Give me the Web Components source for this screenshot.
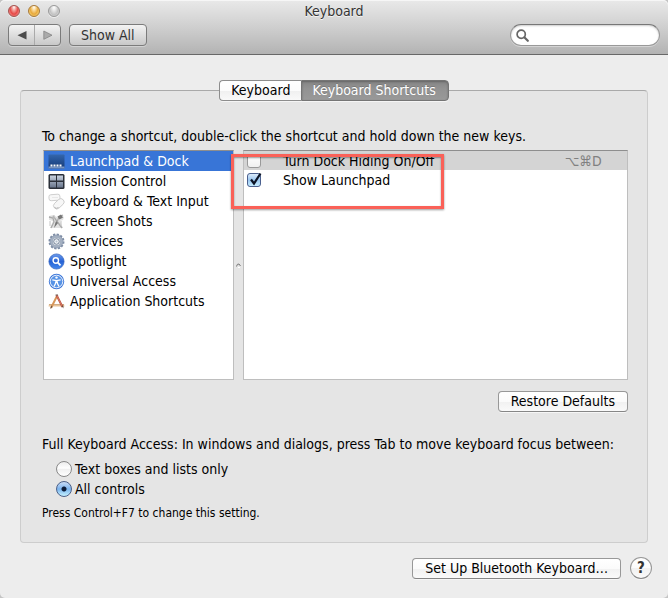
<!DOCTYPE html>
<html lang="en">
<head>
<meta charset="utf-8">
<title>Keyboard</title>
<style>
html { background: #c4c4c4; }
body { margin: 0; font: 14px/20px "DejaVu Sans Condensed", "DejaVu Sans", sans-serif; color: #000; }
</style>
</head>
<body>
<pref-window></pref-window>
<script>
function define(name, html) {
  const t = document.createElement('template');
  t.innerHTML = '<style>*{box-sizing:border-box}button,input{font:inherit;color:inherit;margin:0}</style>' + html;
  customElements.define(name, class extends HTMLElement {
    constructor() {
      super();
      this.attachShadow({ mode: 'open' }).append(t.content.cloneNode(true));
    }
  });
}

define('mac-button', `
<style>
:host { display: block; }
button { display: block; width: 100%; height: 21px; padding: 0 12px; white-space: nowrap;
  line-height: 19px; border: 1px solid #989898; border-radius: 4px; border-bottom-color: #868686;
  background: linear-gradient(#fff, #fbfbfb 50%, #f1f1f1 52%, #fafafa); box-shadow: 0 1px 0 #f6f6f6; }
:host([kind=toolbar]) button { height: 22px; padding: 0 11px; color: #333; border-color: #7b7b7b;
  line-height: 20px; background: linear-gradient(#f3f3f3, #c8c8c8); box-shadow: 0 1px 0 #d2d2d2; }
:host([kind=help]) button { width: 22px; height: 22px; padding: 0; border-radius: 50%; font-size: 15px; font-weight: 700; line-height: 20px; color: #333; }
</style>
<button type="button"><slot></slot></button>`);

define('title-toolbar', `
<style>
:host { display: block; padding: 1px 8px 8px; border-bottom: 1px solid #686868;
  border-radius: 5px 5px 0 0; background: linear-gradient(#e9e9e9, #cfcfcf 50%, #b3b3b3); box-shadow: inset 0 1px 0 #f6f6f6; }
.title { display: grid; grid-template-columns: 1fr auto 1fr; align-items: center; height: 20px; margin-bottom: 3px; color: #333; }
h1 { margin: 0; font: inherit; text-shadow: 0 1px 0 #f5f5f5; }
.lights { display: flex; gap: 8px; }
.lights button { width: 12px; height: 12px; padding: 0; border: 1px solid #999; border-radius: 50%;
  background: radial-gradient(ellipse at 50% 15%, #fff 0, #e9e9e9 25%, #c2c2c2 60%, #e4e4e4); box-shadow: 0 1px 0 #eee; }
.lights .close { border-color: #a3524e; background: radial-gradient(ellipse at 50% 12%, #fff 0, #f2a6a0 25%, #e64b49 55%, #ffaaa6); }
.lights .min { border-color: #a7793a; background: radial-gradient(ellipse at 50% 12%, #fff 0, #fadb9d 25%, #e8aa3e 55%, #ffe991); }
.bar { display: flex; gap: 8px; align-items: center; }
.nav { display: flex; height: 22px; border: 1px solid #7b7b7b; border-radius: 4px; background: linear-gradient(#f3f3f3, #c8c8c8); box-shadow: 0 1px 0 #d2d2d2; }
.nav button { display: grid; place-items: center; width: 25px; padding: 0; border: 0; background: none; }
.nav button + button { width: 26px; border-left: 1px solid #aaa; }
.search { display: flex; align-items: center; width: 150px; height: 22px; margin-left: auto; padding-left: 5px; border: 1px solid #999; border-top-color: #777; border-radius: 11px;
  background: #fff; box-shadow: inset 0 1px 2px #ccc, 0 1px 0 #d4d4d4; }
.search input { flex: 1; min-width: 0; border: 0; outline: 0; background: none; padding: 0 8px 0 4px; }
svg { display: block; }
</style>
<div class="title">
  <div class="lights"><button class="close" aria-label="Close"></button><button class="min" aria-label="Minimize"></button><button aria-label="Zoom"></button></div>
  <h1>Keyboard</h1>
</div>
<div class="bar">
  <div class="nav">
    <button aria-label="Back"><svg width="10" height="10"><path d="M9.500 1V9.500L.5 5.200Z" fill="#4b4b4b"/></svg></button>
    <button aria-label="Forward"><svg width="10" height="10"><path d="M.8 1V9.300L9 5.200Z" fill="#aaa" stroke="#858585" stroke-width=".8"/></svg></button>
  </div>
  <mac-button kind="toolbar">Show All</mac-button>
  <label class="search"><svg width="13" height="13" fill="none" stroke="#666"><circle cx="5.200" cy="5.200" r="4.100" stroke-width="1.700"/><path d="M8.300 8.300L11.800 11.800" stroke-width="2.200" stroke-linecap="round"/></svg><input type="text" aria-label="Search"></label>
</div>`);

define('tab-bar', `
<style>
:host { display: flex; justify-content: center; }
button { height: 21px; padding: 0 11px; border: 1px solid #8d8d8d; line-height: 19px; white-space: nowrap; border-radius: 4px 0 0 4px; border-right: 0; background: linear-gradient(#fff, #fcfcfc 50%, #f0f0f0 52%, #f9f9f9); box-shadow: 0 1px 0 #f5f5f5; }
button[aria-selected=true] { padding: 0 12px 0 10px; color: #fff; border: 1px solid #757575; border-radius: 0 4px 4px 0; background: linear-gradient(#858585, #929292 40%, #999); box-shadow: inset 0 1px 2px #666, 0 1px 0 #f5f5f5; text-shadow: 0 -1px 0 #777; }
</style>
<button role="tab" aria-selected="false">Keyboard</button><button role="tab" aria-selected="true">Keyboard Shortcuts</button>`);

define('category-row', `
<style>
:host { display: block; }
button { display: flex; align-items: center; gap: 5px; width: 100%; height: 20px; padding: 0 4px; border: 0; background: none; text-align: left; white-space: nowrap; }
:host([selected]) button { color: #fff; background: #3875d7; }
::slotted(svg) { display: block; flex: none; }
</style>
<button type="button"><slot name="icon"></slot><span><slot></slot></span></button>`);

define('category-list', `
<style>
:host { display: block; background: #fff; border: 1px solid #bebebe; border-top-color: #8e8e8e; }
</style>
<category-row selected><svg slot="icon" width="17" height="17" viewBox="0 0 17 17"><defs><linearGradient id="dk" x2="0" y2="1"><stop stop-color="#3466ac"/><stop offset=".5" stop-color="#244f91"/><stop offset="1" stop-color="#183b75"/></linearGradient></defs><rect x=".5" y="1.500" width="16" height="14" rx=".7" fill="url(#dk)"/><path d="M.5 13.500h16v2H.5z" fill="#7895c2"/><path d="M2.500 11.500h2v2h-2zM5.500 11.500h2v2h-2zM8.500 11.500h2v2h-2zM11.500 11.500h2v2h-2z" fill="#fff"/></svg>Launchpad &amp; Dock</category-row>
<category-row><svg slot="icon" width="17" height="17" viewBox="0 0 17 17"><defs><linearGradient id="mc" x2="0" y2="1"><stop stop-color="#c9d2df"/><stop offset="1" stop-color="#68758b"/></linearGradient></defs><rect x=".5" y="1" width="16" height="15" rx="1.500" fill="#2b3039"/><path d="M2 2.500h6v5H2zM9 2.500h6v5H9zM2 9h6v5.500H2zM9 9h6v5.500H9z" fill="url(#mc)"/></svg>Mission Control</category-row>
<category-row><svg slot="icon" width="17" height="17" viewBox="0 0 17 17" fill="#f7f7f7" stroke="#c6c6c6" stroke-width=".8"><rect x="1" y="1.500" width="11" height="6" rx="2" transform="rotate(-4 6 5)"/><path d="M4 4.500h6" stroke="#e2e2e2"/><rect x="5" y="7.500" width="12" height="6.500" rx="3.200" transform="rotate(-43 11 11)"/><path d="M6.500 14.500q2 1.500 4 0" stroke="#aaa" fill="none"/></svg>Keyboard &amp; Text Input</category-row>
<category-row><svg slot="icon" width="17" height="17" viewBox="0 0 17 17"><path d="M1 3l4-1 4 2 4-2 3 2-1 3-3 1 3 7H2l3-7-4-1z" fill="#e2e2e2"/><path d="M1 4l4 1 1 4-3 6M15 2l-4 2-2 5M5 3l6 8 3 4" stroke="#aaa" fill="none" stroke-width="1.300"/><path d="M9.500 3.500l3.500-2 2 3-3.500 2zM8 8l2 2-4 5 1-4z" fill="#777"/><path d="M2 8v5M13 8v5M6 2v4" stroke="#c4c4c4"/></svg>Screen Shots</category-row>
<category-row><svg slot="icon" width="17" height="17" viewBox="0 0 17 17" fill="none"><circle cx="8.500" cy="8.500" r="7" stroke="#7e8da5" stroke-width="2" stroke-dasharray="2.200 1.465"/><circle cx="8.500" cy="8.500" r="5" stroke="#a4b0c1" stroke-width="3"/><circle cx="8.500" cy="8.500" r="6.500" stroke="#8291a9" stroke-width=".7"/><circle cx="8.500" cy="8.500" r="2.800" fill="#eff2f5" stroke="#6f7f96"/><circle cx="8.500" cy="8.500" r="1" fill="#b4bfce"/></svg>Services</category-row>
<category-row><svg slot="icon" width="17" height="17" viewBox="0 0 17 17" fill="none"><defs><linearGradient id="sp" x2="0" y2="1"><stop stop-color="#6d9cec"/><stop offset=".5" stop-color="#2763d5"/><stop offset="1" stop-color="#4589ed"/></linearGradient></defs><circle cx="8.500" cy="8.500" r="7.600" fill="url(#sp)" stroke="#3363bd" stroke-width=".7"/><circle cx="7.800" cy="7.500" r="2.700" stroke="#fff" stroke-width="1.400"/><path d="M9.900 9.700l2.600 2.700" stroke="#fff" stroke-width="1.900"/></svg>Spotlight</category-row>
<category-row><svg slot="icon" width="17" height="17" viewBox="0 0 17 17" fill="none"><circle cx="8.500" cy="8.500" r="7.700" fill="#3974d7"/><circle cx="8.500" cy="8.500" r="6.300" fill="#5793e6" stroke="#fff" stroke-width=".9"/><circle cx="8.500" cy="4.600" r="1.200" fill="#fff"/><path d="M4.300 6.900l4.200.7 4.200-.7M8.500 7v3M7.900 8l-.4 2.500L6 13.500M9.100 8l.4 2.500 1.500 3" stroke="#fff" stroke-width="1.300"/></svg>Universal Access</category-row>
<category-row><svg slot="icon" width="17" height="17" viewBox="0 0 17 17" fill="none"><path d="M1 11h15l.5 2.500H.5z" fill="#e9c399"/><path d="M1 11.500h15" stroke="#c9a680" stroke-width=".8"/><path d="M9.500 2L3 15" stroke="#d79658" stroke-width="2"/><path d="M8.500 2l6 12" stroke="#b44638" stroke-width="2"/><path d="M9 3l5.500 11" stroke="#ee9a80" stroke-width=".7"/><path d="M3.500 12.500L2 16l2.500-2zM13.500 13l2 2.500-.3-3.200z" fill="#635044"/><path d="M7.500 2h2.500" stroke="#777"/></svg>Application Shortcuts</category-row>`);

define('shortcut-table', `
<style>
:host { display: block; position: relative; background: #fff; border: 1px solid #bebebe; border-top-color: #8e8e8e; }
table { width: 100%; border-collapse: collapse; }
td { height: 20px; padding: 0; white-space: nowrap; line-height: 18px; }
tr:first-child td { height: 19px; background: #d4d4d4; }
td:first-child { width: 39px; padding-left: 3px; }
td:last-child { width: 62px; color: #808080; font-family: "DejaVu Sans Condensed", "DejaVu Sans", sans-serif; }
input { display: block; appearance: none; width: 14px; height: 14px; border: 1px solid #999; border-radius: 3px; background: linear-gradient(#fff, #f0f0f0); }
.check { display: grid; width: 18px; }
.check > * { grid-area: 1/1; align-self: center; }
.check svg { display: block; pointer-events: none; z-index: 1; }
input:checked { border-color: #4b608e; background: linear-gradient(#dcebfa, #9cc8f2 50%, #c5edff); }
.mark { position: absolute; z-index: 2; left: -13px; top: 3px; width: 213px; height: 55px; border: 3px solid #fa6158; box-shadow: 0 1px 2px #0006, inset 0 1px 2px #0006; pointer-events: none; }
</style>
<table>
<tr><td><input type="checkbox" id="a"></td><td><label for="a">Turn Dock Hiding On/Off</label></td><td>⌥⌘D</td></tr>
<tr><td><div class="check"><input type="checkbox" id="b" checked><svg width="17" height="18"><path d="M4 8.500L7 12.500 13.500 2.500" fill="none" stroke="#0b1426" stroke-width="2.200"/></svg></div></td><td><label for="b">Show Launchpad</label></td><td></td></tr>
</table>
<div class="mark"></div>`);

define('shortcut-panes', `
<style>
:host { display: grid; grid-template-columns: 191px 9px 1fr; min-height: 230px; }
.split { display: grid; place-items: center; }
</style>
<category-list></category-list>
<div class="split"><svg width="5" height="5"><path d="M.5 3.500Q1 .5 3 1l1.500 2" fill="none" stroke="#777"/><path d="M2 4.500h2" stroke="#fff"/></svg></div>
<shortcut-table></shortcut-table>`);

define('keyboard-access', `
<style>
:host { display: block; }
fieldset { margin: 0; padding: 0; border: 0; }
legend { padding: 0; margin-bottom: 5px; }
label { display: flex; align-items: center; gap: 3px; height: 20px; margin-left: 14px; }
input { appearance: none; flex: none; width: 16px; height: 16px; border: 1px solid #898989; border-radius: 50%; background: linear-gradient(#ececec, #fff 45%, #f0f0f0 50%, #fff); }
input:checked { border-color: #4b6089; background: radial-gradient(circle, #0c1c38 0 2px, transparent 3px), linear-gradient(#cadcf5, #83b7ef 45%, #79b3ed 50%, #c5f2ff); }
p { margin: 5px 0 0; font-size: 12px; line-height: 18px; }
</style>
<fieldset><legend>Full Keyboard Access: In windows and dialogs, press Tab to move keyboard focus between:</legend>
<label><input type="radio" name="focus">Text boxes and lists only</label>
<label><input type="radio" name="focus" checked>All controls</label>
</fieldset>
<p>Press Control+F7 to change this setting.</p>`);

define('pref-window', `
<style>
:host { display: flex; flex-direction: column; min-height: 100vh; border-radius: 5px; background: #ededed; }
main { padding: 25px 20px 0; }
section { margin-top: -11px; padding: 35px 19px 20px 22px; border: 1px solid #cdcdcd; border-top-color: #a9a9a9; border-radius: 4px; background: #e5e5e5; }
tab-bar { position: relative; }
.hint { margin: 0 0 4px -1px; }
.restore { display: flex; justify-content: flex-end; margin: 11px 0 22px; }
keyboard-access { margin-left: -1px; }
footer { display: flex; justify-content: flex-end; align-items: center; gap: 9px; padding: 14px 16px 18px; }
</style>
<title-toolbar></title-toolbar>
<main>
<tab-bar role="tablist"></tab-bar>
<section>
<p class="hint">To change a shortcut, double-click the shortcut and hold down the new keys.</p>
<shortcut-panes></shortcut-panes>
<div class="restore"><mac-button>Restore Defaults</mac-button></div>
<keyboard-access></keyboard-access>
</section>
</main>
<footer><mac-button>Set Up Bluetooth Keyboard…</mac-button><mac-button kind="help">?</mac-button></footer>`);
</script>
</body>
</html>
